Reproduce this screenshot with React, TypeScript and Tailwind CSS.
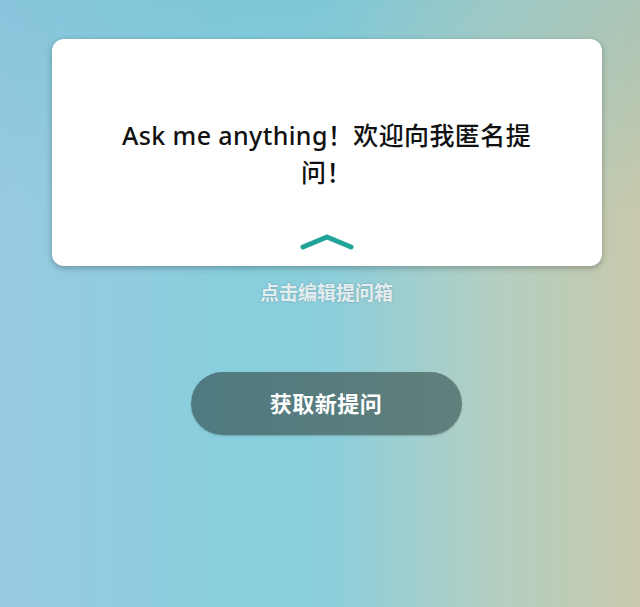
// Anonymous question box card
const App = () => {
  return (
    <div
      className="min-h-screen w-full flex flex-col items-center bg-[linear-gradient(180deg,rgba(100,185,205,0.3)_0%,rgba(100,185,205,0)_35%),linear-gradient(90deg,#98cae2_0%,#88cedc_38%,#8ccedb_52%,#b2cfc3_76%,#c8c9ab_100%)]"
      style={{ fontFamily: '"Noto Sans", "Noto Sans CJK SC", sans-serif' }}
    >
      <div className="mt-[39px] w-[550px] h-[227px] bg-white rounded-[12px] shadow-[0_2px_6px_rgba(0,0,0,0.28)] flex flex-col items-center pt-[78px] ml-[13px]">
        <p className="w-[450px] text-center text-[25px] leading-[37px] font-medium tracking-[0.4px] text-[#111111]">
          Ask me anything！欢迎向我匿名提问！
        </p>
        <svg className="mt-[43px]" width="56" height="17" viewBox="0 0 56 17" fill="none">
          <polyline
            points="4,13 28,3 52,13"
            stroke="#1fa497"
            strokeWidth="5"
            strokeLinecap="round"
            strokeLinejoin="round"
          />
        </svg>
      </div>

      <div className="mt-[14px] ml-[13px] text-[19px] leading-[26px] font-bold text-white/80 [text-shadow:0_0_2px_rgba(90,120,130,0.6)]">
        点击编辑提问箱
      </div>

      <button className="mt-[66px] ml-[12px] w-[271px] h-[63px] rounded-full bg-linear-to-r from-[#4e7a81] to-[#617f7b] shadow-[0_1px_2px_rgba(0,0,0,0.2)] text-white text-[22px] font-bold tracking-[0.5px]">
        获取新提问
      </button>
    </div>
  );
};

export default App;
